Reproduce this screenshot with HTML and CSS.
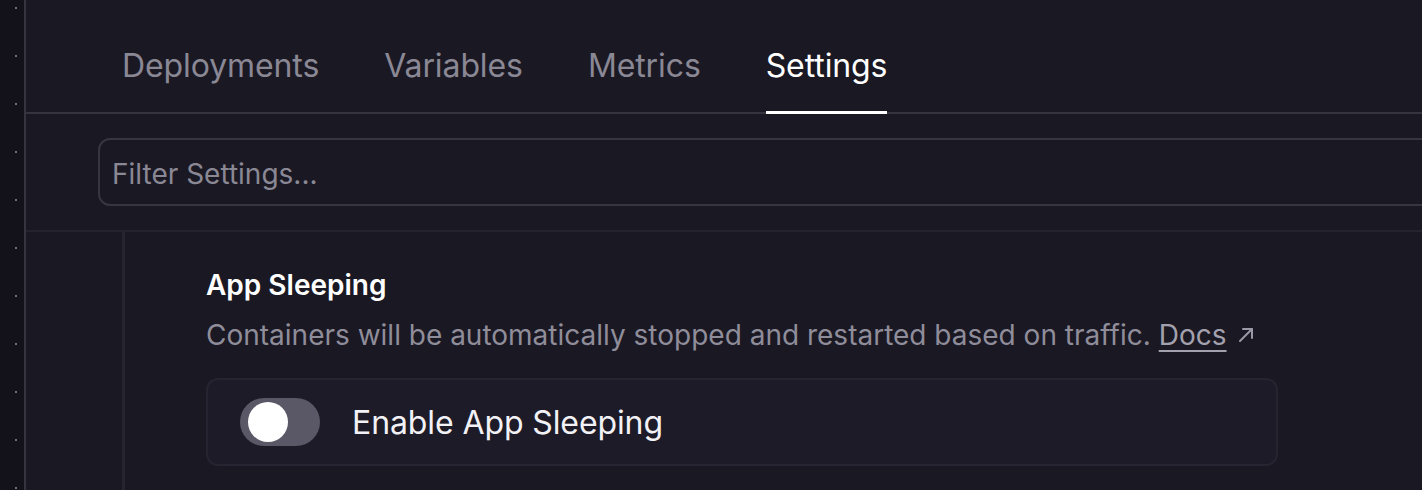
FILE: index.html
```html
<!DOCTYPE html>
<html lang="en">
<head>
<meta charset="utf-8">
<title>Settings</title>
<link rel="stylesheet" href="styles.css">
</head>
<body>
<div class="app">
  <aside class="rail"></aside>
  <main class="main">
    <nav class="tabs">
      <a class="tab">Deployments</a>
      <a class="tab">Variables</a>
      <a class="tab">Metrics</a>
      <a class="tab active">Settings</a>
    </nav>
    <div class="filter-wrap">
      <div class="filter"><span class="placeholder">Filter Settings...</span></div>
    </div>
    <section class="content">
      <div class="setting">
        <h2 class="title">App Sleeping</h2>
        <p class="desc">Containers will be automatically stopped and restarted based on traffic. <a class="docs">Docs</a><svg class="ext" width="18" height="18" viewBox="0 0 18 18" fill="none" stroke="#9b99a6" stroke-width="2" stroke-linecap="round" stroke-linejoin="round"><path d="M3 15 L15 3"/><path d="M6 3 H15 V12"/></svg></p>
        <div class="card">
          <span class="toggle"><span class="knob"></span></span>
          <span class="label">Enable App Sleeping</span>
        </div>
      </div>
    </section>
  </main>
</div>
</body>
</html>
```

FILE: styles.css
```css
html, body {
  margin: 0;
  padding: 0;
  height: 100%;
  background: #1a1823;
  font-family: Inter, "Noto Sans", sans-serif;
  overflow: hidden;
}

.app {
  display: flex;
  height: 490px;
}

.rail {
  width: 24px;
  flex: none;
  background-color: #13121b;
  background-image: radial-gradient(circle at 16px 8px, #706e7a 0, #706e7a 1.1px, transparent 1.4px);
  background-size: 24px 48px;
  border-right: 2px solid #36343e;
}

.main {
  flex: 1;
  min-width: 0;
  display: flex;
  flex-direction: column;
  overflow: hidden;
}

.tabs {
  display: flex;
  gap: 65px;
  padding-left: 96px;
  border-bottom: 2px solid #36343e;
}

.tab {
  font-size: 32px;
  line-height: 40px;
  padding: 46px 0 26px;
  color: #8a8895;
  border-bottom: 2px solid transparent;
  margin-bottom: -2px;
  letter-spacing: -0.1px;
}

.tab.active {
  color: #ffffff;
  border-bottom: 3px solid #ffffff;
  padding-bottom: 25px;
  margin-bottom: -2px;
}

.filter-wrap {
  padding: 24px 0 24px 72px;
  border-bottom: 2px solid #25232e;
}

.filter {
  width: 1400px;
  height: 68px;
  border: 2px solid #37353f;
  border-radius: 12px;
  display: flex;
  align-items: center;
  padding-left: 12px;
  padding-top: 3px;
  box-sizing: border-box;
}

.placeholder {
  font-size: 28px;
  color: #8a8895;
}

.content {
  flex: 1;
  margin-left: 96px;
  border-left: 3px solid #26242f;
  padding-left: 81px;
  padding-top: 35px;
}

.title {
  margin: 0;
  font-size: 28px;
  line-height: 36px;
  font-weight: 600;
  color: #ffffff;
}

.desc {
  margin: 14px 0 0;
  font-size: 28px;
  line-height: 36px;
  color: #8f8d9a;
  display: flex;
  align-items: center;
  white-space: nowrap;
}

.docs {
  color: #a3a1ad;
  text-decoration: underline;
  text-underline-offset: 5px;
  text-decoration-thickness: 2px;
  margin-left: 8px;
}

.ext {
  margin-left: 10px;
}

.card {
  margin-top: 25px;
  width: 1072px;
  height: 88px;
  border: 2px solid #262430;
  border-radius: 12px;
  background: #1d1b27;
  display: flex;
  align-items: center;
  padding-left: 32px;
  box-sizing: border-box;
}

.toggle {
  width: 80px;
  height: 48px;
  border-radius: 24px;
  background: #5a5866;
  display: flex;
  align-items: center;
  padding-left: 8px;
  box-sizing: border-box;
  flex: none;
}

.knob {
  width: 40px;
  height: 40px;
  border-radius: 50%;
  background: #ffffff;
}

.label {
  margin-left: 32px;
  font-size: 32px;
  letter-spacing: -0.1px;
  color: #f2f1f6;
}
```
